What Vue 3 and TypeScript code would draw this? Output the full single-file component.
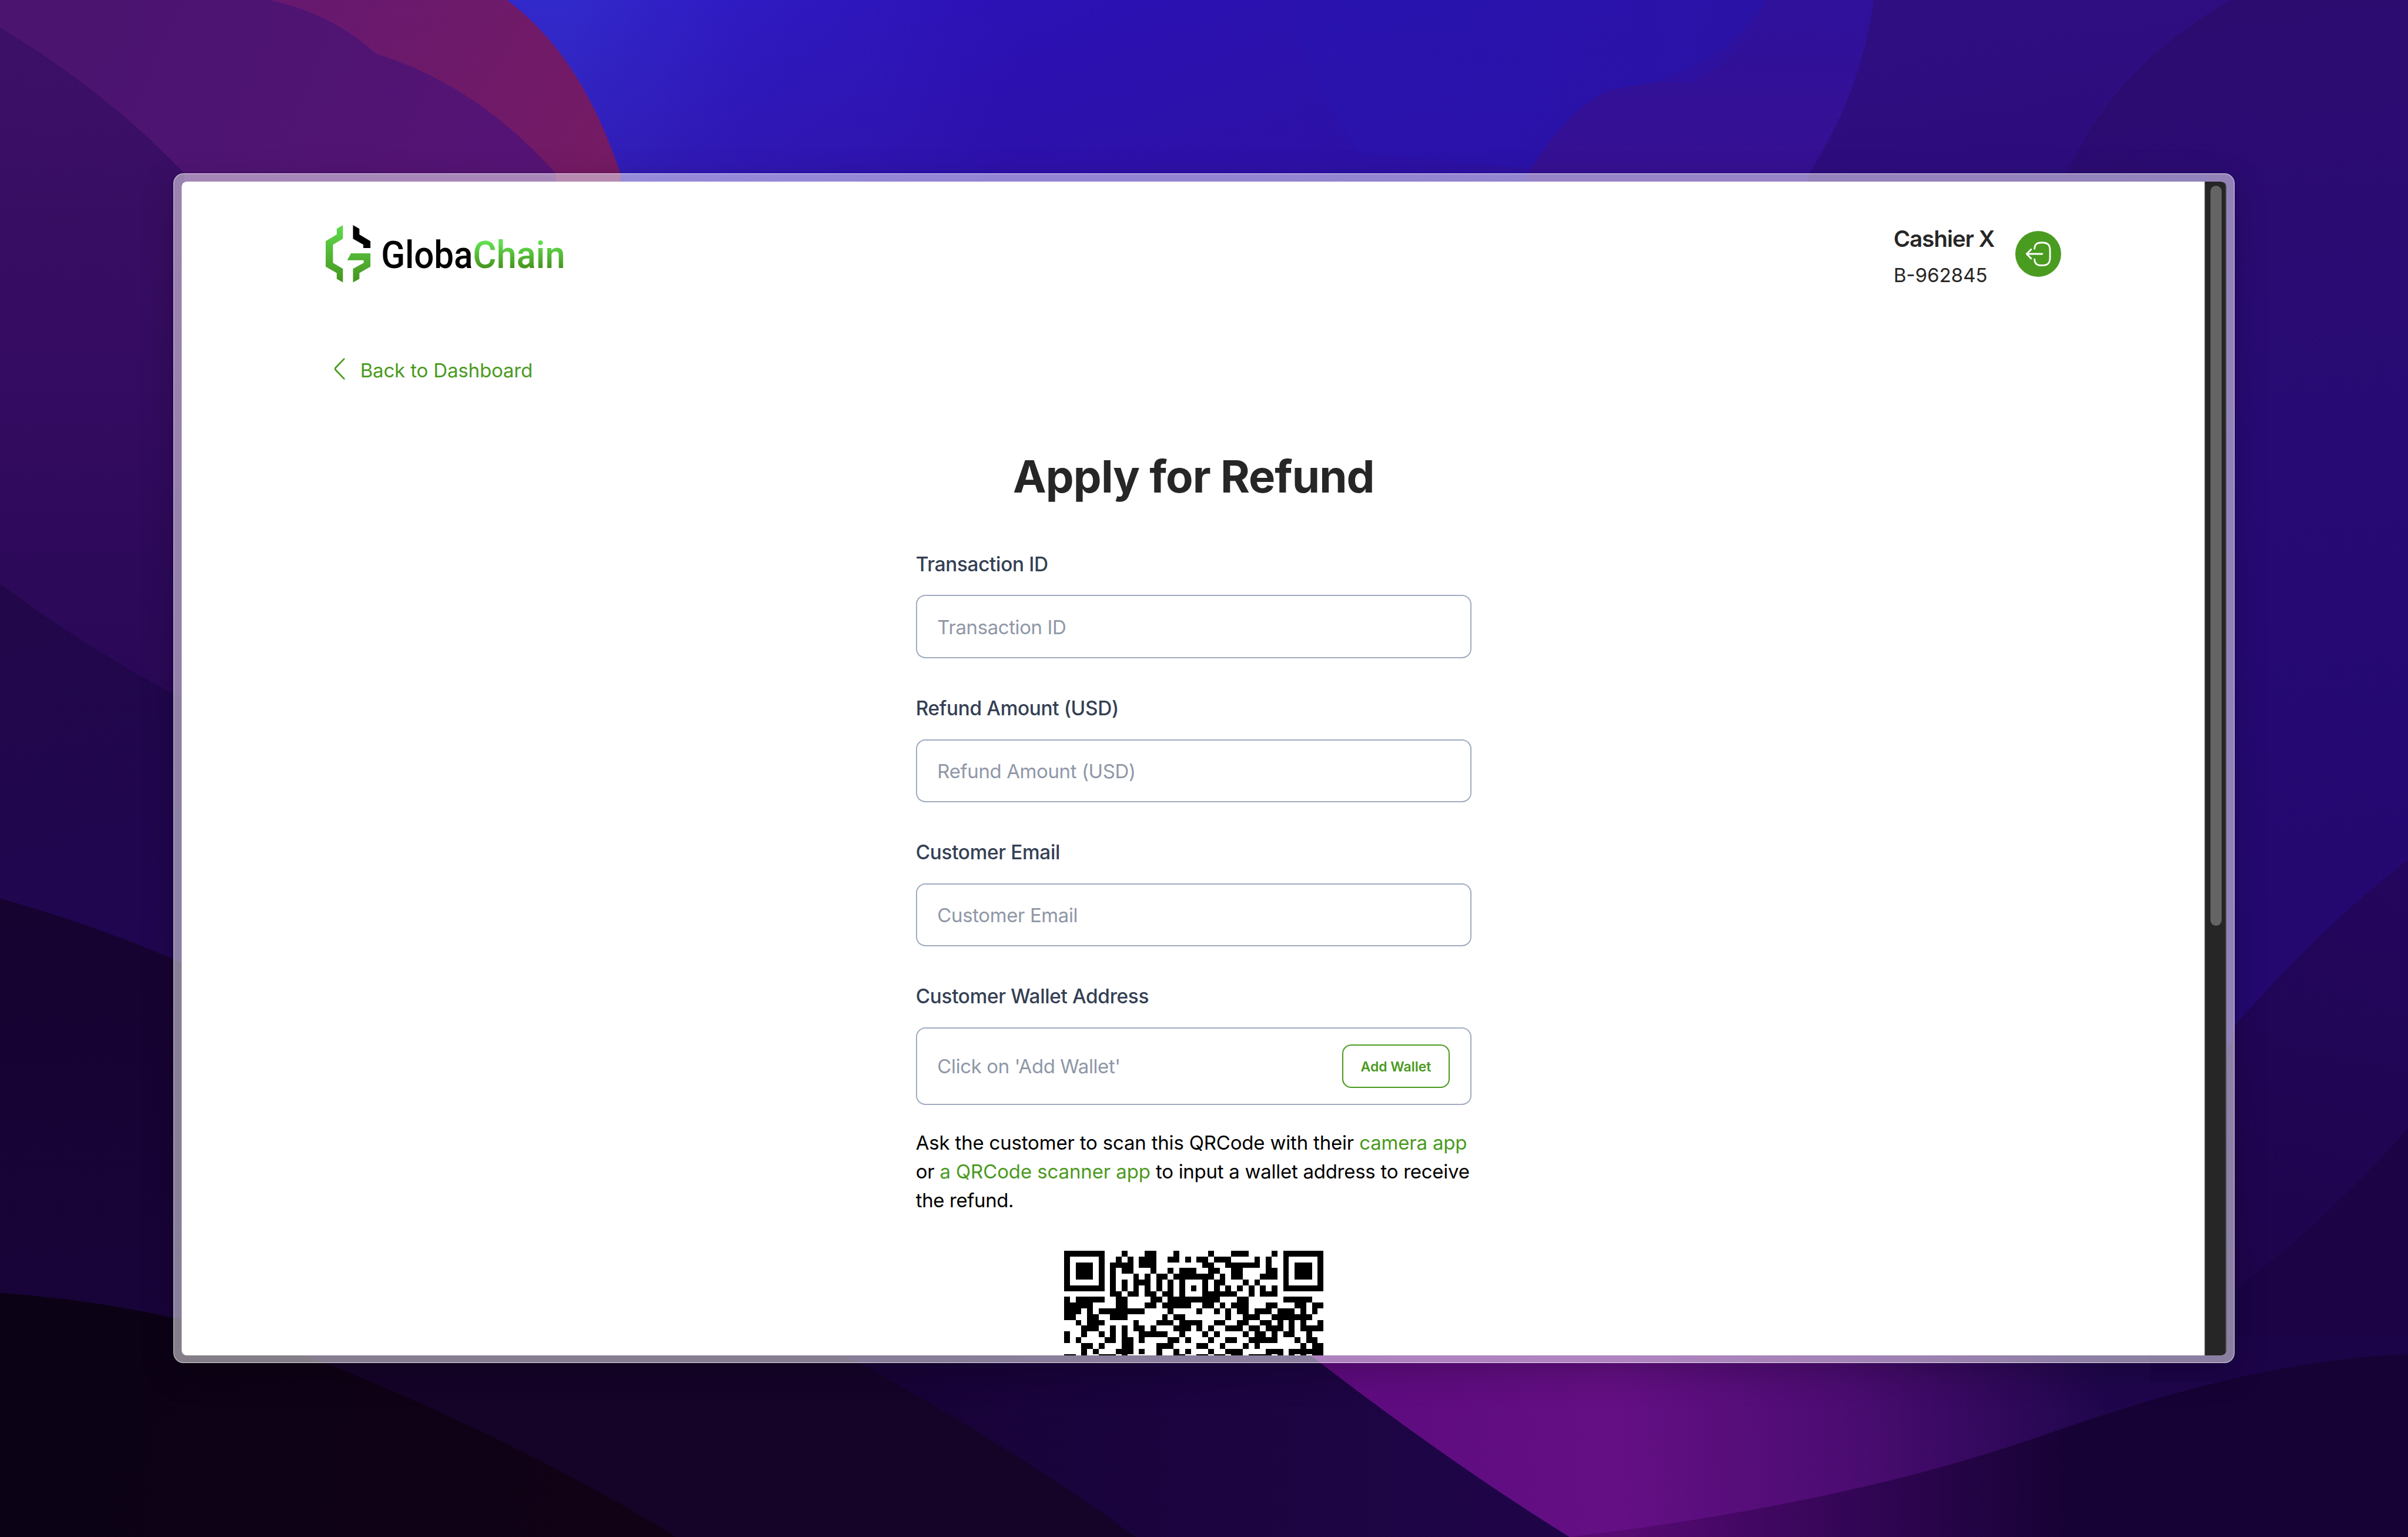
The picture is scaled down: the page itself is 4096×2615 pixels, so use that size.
<script setup lang="ts">
interface Field {
  label: string
}

const fields: Field[] = [
  { label: 'Transaction ID' },
  { label: 'Refund Amount (USD)' },
  { label: 'Customer Email' },
]

// Dark modules of each code row, as "first-last" column runs.
const qrRows: string[] = [
  '0-6 10 14-15 19 25 29-31 36 38-44',
  '0 6 9 11 13-15 18-19 21 23-24 26-28 33 35 38 44',
  '0 2-4 6 8-11 13-15 24-25 28-33 35 38 40-42 44',
  '0 2-4 6 8 10-11 15 18 20-22 25-26 29-30 35-36 38 40-42 44',
  '0 2-4 6 8 12 14 16-17 19-25 27 29-30 34-36 38 40-42 44',
  '0 6 8 10 12-14 16 18 20 24 26-27 31 33 38 44',
  '0-6 8 10 12 14 16 18 20 22 24 26 28 30 32 34 36 38-44',
  '8-9 11-12 14-15 17-18 20 24-29 32 34-36',
  '0 2-6 9-10 15-16 18-26 30-31 38-42',
  '0-4 9-10 14-15 17-21 24-25 27 29-31 35-36 40-41 43-44',
  '0-2 4 6-13 18 23 26 28 30-31 33-35 37-39 41 43',
  '0-1 4-5 8-10 17 19-20 28 31-33 36-42',
  '2 4-6 12 16-18 20-23 26-27 30-31 34-35 37 39 41 44',
  '3-5 8 10 12-13 15 19-21 23 25 28-30 32-33 35-37 39 41-44',
  '0 3 6 8 10 13-17 20 24 26 31 33-34 36 38-39 42',
  '0 2 7-8 10-11 13 18-19 21 25 28-29 32-36 40 42-43',
  '3-4 6 10-11 16-18 23-24 27 31 33 41 43-44',
  '3 5 9-11 13 16 19 21 25 28-30 35-37 39-44',
  '0-1 3 6-8 10 16 19-20 23-24 26-27 29-30 32-35 37 39 41 43-44',
]

const qrPath = qrRows
  .map((row, y) =>
    row
      .split(' ')
      .map((run) => {
        const [a, b = a] = run.split('-').map(Number)
        return `M${a} ${y}h${b - a + 1}v1h-${b - a + 1}z`
      })
      .join(''),
  )
  .join('')
</script>

<template>
  <div class="desktop">
    <svg class="wallpaper" viewBox="0 0 1568 1001" preserveAspectRatio="none" aria-hidden="true">
      <defs>
        <linearGradient id="sky" gradientUnits="userSpaceOnUse" x1="370" y1="60" x2="1200" y2="20">
          <stop offset="0" stop-color="#3229cb" />
          <stop offset=".13" stop-color="#2f1bc2" />
          <stop offset=".35" stop-color="#2c11b5" />
          <stop offset=".7" stop-color="#2b12ab" />
          <stop offset="1" stop-color="#30119a" />
        </linearGradient>
        <linearGradient id="skyShade" x1="0" y1="0" x2="0" y2="1">
          <stop offset="0" stop-color="#30109a" stop-opacity="0" />
          <stop offset="1" stop-color="#30109a" stop-opacity=".5" />
        </linearGradient>
        <linearGradient id="ridge" gradientUnits="userSpaceOnUse" x1="1100" y1="0" x2="1100" y2="113">
          <stop offset="0" stop-color="#2f119c" />
          <stop offset="1" stop-color="#361092" />
        </linearGradient>
        <linearGradient id="east" gradientUnits="userSpaceOnUse" x1="1300" y1="0" x2="1420" y2="720">
          <stop offset="0" stop-color="#2f0e82" />
          <stop offset=".4" stop-color="#290a74" />
          <stop offset=".7" stop-color="#270a72" />
          <stop offset="1" stop-color="#1e0550" />
        </linearGradient>
        <linearGradient id="eastFar" gradientUnits="userSpaceOnUse" x1="1450" y1="0" x2="1500" y2="600">
          <stop offset="0" stop-color="#2d0c70" />
          <stop offset=".5" stop-color="#270a74" />
          <stop offset="1" stop-color="#240870" />
        </linearGradient>
        <linearGradient id="eastLow" gradientUnits="userSpaceOnUse" x1="1560" y1="560" x2="1480" y2="900">
          <stop offset="0" stop-color="#24065e" />
          <stop offset="1" stop-color="#1c0448" />
        </linearGradient>
        <linearGradient id="rose" gradientUnits="userSpaceOnUse" x1="200" y1="0" x2="390" y2="110">
          <stop offset="0" stop-color="#67196f" />
          <stop offset="1" stop-color="#751a64" />
        </linearGradient>
        <linearGradient id="plum" gradientUnits="userSpaceOnUse" x1="60" y1="0" x2="320" y2="113">
          <stop offset="0" stop-color="#4a146f" />
          <stop offset="1" stop-color="#551475" />
        </linearGradient>
        <linearGradient id="west" gradientUnits="userSpaceOnUse" x1="0" y1="20" x2="0" y2="460">
          <stop offset="0" stop-color="#3c1066" />
          <stop offset=".55" stop-color="#330b60" />
          <stop offset="1" stop-color="#290856" />
        </linearGradient>
        <linearGradient id="westMid" gradientUnits="userSpaceOnUse" x1="0" y1="380" x2="60" y2="620">
          <stop offset="0" stop-color="#22074a" />
          <stop offset="1" stop-color="#200650" />
        </linearGradient>
        <linearGradient id="westLow" gradientUnits="userSpaceOnUse" x1="0" y1="585" x2="0" y2="880">
          <stop offset="0" stop-color="#160330" />
          <stop offset="1" stop-color="#19043a" />
        </linearGradient>
        <linearGradient id="floor" gradientUnits="userSpaceOnUse" x1="0" y1="900" x2="440" y2="1001">
          <stop offset="0" stop-color="#0b0216" />
          <stop offset="1" stop-color="#120216" />
        </linearGradient>
        <linearGradient id="indigo" gradientUnits="userSpaceOnUse" x1="600" y1="0" x2="1000" y2="0">
          <stop offset="0" stop-color="#180338" />
          <stop offset="1" stop-color="#1f0548" />
        </linearGradient>
        <linearGradient id="magenta" gradientUnits="userSpaceOnUse" x1="880" y1="900" x2="1370" y2="880">
          <stop offset="0" stop-color="#5f0b80" />
          <stop offset=".35" stop-color="#640f84" />
          <stop offset=".65" stop-color="#4c0c72" />
          <stop offset="1" stop-color="#1f064c" />
        </linearGradient>
        <linearGradient id="wave" gradientUnits="userSpaceOnUse" x1="1060" y1="0" x2="1350" y2="0">
          <stop offset="0" stop-color="#560a72" />
          <stop offset=".5" stop-color="#330556" />
          <stop offset="1" stop-color="#160234" />
        </linearGradient>
      </defs>
      <rect width="1568" height="1001" fill="#1c0440" />
      <rect x="300" width="950" height="200" fill="url(#sky)" />
      <rect x="300" width="950" height="140" fill="url(#skyShade)" />
      <path d="M840 0Q850 50 885 100L1000 110Q1025 70 1050 58Q1120 50 1150 0Z" fill="#2814b0" opacity=".5" />
      <path d="M995 113Q1020 72 1045 60Q1075 52 1100 54Q1135 40 1150 0H1225L1190 140H990Z" fill="url(#ridge)" />
      <path d="M1220 0H1568V720H1400L1100 400L1178 113Q1212 60 1220 0Z" fill="url(#east)" />
      <path d="M1452 0H1568V560Q1500 640 1440 690V113H1346Q1375 45 1452 0Z" fill="url(#eastFar)" />
      <path d="M1568 560Q1515 600 1455 668L1400 1001H1568Z" fill="url(#eastLow)" />
      <path d="M1568 735Q1510 800 1455 840V1001H1568Z" fill="#1b0346" />
      <path d="M0 0H330Q378 35 404 113V200H0Z" fill="url(#rose)" />
      <path d="M0 0H175Q215 8 245 35Q310 55 362 113V200H0Z" fill="url(#plum)" />
      <path d="M0 18Q70 60 120 113V520H0Z" fill="url(#west)" />
      <path d="M0 380Q60 425 125 458V660H0Z" fill="url(#westMid)" />
      <path d="M0 585Q70 605 125 630V920H0Z" fill="url(#westLow)" />
      <path d="M0 842Q70 850 125 870L590 880L760 1001H0Z" fill="#150328" />
      <path d="M0 842Q120 850 230 895Q350 945 440 1001H0Z" fill="url(#floor)" />
      <path d="M545 880H880L1040 1001H740Q640 930 545 880Z" fill="url(#indigo)" />
      <path d="M850 880H1520V1001H1022Q940 950 850 880Z" fill="url(#magenta)" />
      <path d="M1400 870H1568V900H1400Z" fill="#1c0448" />
      <path d="M1022 1001Q1200 980 1330 935Q1470 885 1568 882V1001Z" fill="url(#wave)" />
    </svg>

    <div class="window">
      <div class="viewport">
        <main class="page">
          <header class="topbar">
            <svg class="logo" viewBox="0 0 510 122" role="img">
              <defs>
                <linearGradient id="leaf" x1="0" y1="0" x2="0" y2="122" gradientUnits="userSpaceOnUse">
                  <stop offset="0" stop-color="#60da4c" />
                  <stop offset="1" stop-color="#469420" />
                </linearGradient>
                <linearGradient id="leafText" x1="0" y1="36" x2="0" y2="92" gradientUnits="userSpaceOnUse">
                  <stop offset="0" stop-color="#62e050" />
                  <stop offset="1" stop-color="#46921c" />
                </linearGradient>
              </defs>
              <path d="M36.4 0 23.3 7.7V20L0 33.7V88L23.3 101.3V113.7L36.4 121V92.3L15.4 79.7V41.3L36.4 29Z" fill="url(#leaf)" />
              <path d="M57.7 0 71.2 7.7V20L94.5 33.7V48.3H79.5V41.3L57.7 29Z" fill="#000" />
              <path d="M53.4 59.7H94.5V88L71.2 101.3V113.7L57.7 121V92.3L80.3 79.7V74.3H45.5Z" fill="url(#leaf)" />
              <text x="117" y="90.6" class="brand" textLength="194" lengthAdjust="spacingAndGlyphs">Globa</text>
              <text x="311" y="90.6" class="brand" textLength="195" lengthAdjust="spacingAndGlyphs" fill="url(#leafText)">Chain</text>
            </svg>
            <div class="account">
              <div class="who">
                <strong>Cashier X</strong>
                <span>B-962845</span>
              </div>
              <button class="logout" aria-label="Log out">
                <svg viewBox="0 0 97 97" fill="none" stroke="#fff" stroke-width="3.6" stroke-linecap="round" stroke-linejoin="round">
                  <path d="M40.6 37.5C41.4 27.5 46 24.6 56.4 24.6C68.5 24.6 73.4 29 73.4 41V56C73.4 68 68.5 72.7 56.4 72.7C46 72.7 41.4 69.5 40.6 60" />
                  <path d="M57 48.5H24M33.3 39 24 48.5 33.3 58" />
                </svg>
              </button>
            </div>
          </header>

          <a class="back">
            <svg viewBox="0 0 24 46" fill="none" stroke="#4a9a20" stroke-width="3.4" stroke-linecap="round" stroke-linejoin="round">
              <path d="M21.5 2 4 20.2Q1.5 23 4 25.8L21.5 44" />
            </svg>
            <span>Back to Dashboard</span>
          </a>

          <section class="form">
            <h1>Apply for Refund</h1>
            <div v-for="field in fields" :key="field.label" class="field">
              <label>{{ field.label }}</label>
              <div class="box">{{ field.label }}</div>
            </div>
            <div class="field wallet">
              <label>Customer Wallet Address</label>
              <div class="box tall">
                <span>Click on 'Add Wallet'</span>
                <button class="add">Add Wallet</button>
              </div>
            </div>
            <p class="hint">
              <span class="l1">Ask the customer to scan this QRCode with their <em>camera app</em></span><br />
              <span class="l2">or <em>a QRCode scanner app</em> to input a wallet address to receive</span><br />
              <span class="l3">the refund.</span>
            </p>
            <svg class="qr" viewBox="0 0 45 45" shape-rendering="crispEdges">
              <path :d="qrPath" />
            </svg>
          </section>
        </main>
        <div class="track"><div class="thumb"></div></div>
      </div>
    </div>
  </div>
</template>

<style>
/* 1rem spans 100 layout units of a 5088-unit wide desktop */
html {
  font-size: calc(100vw / 50.88);
}
body {
  margin: 0;
  overflow: hidden;
}
</style>

<style scoped>
.desktop {
  position: relative;
  width: 100vw;
  height: 100vh;
  overflow: hidden;
  box-sizing: border-box;
  padding: 3.67rem;
  font-family: Inter, "Liberation Sans", sans-serif;
  background: #1c0440;
}
.wallpaper {
  position: absolute;
  inset: 0;
  width: 100%;
  height: 100%;
}
.window {
  position: relative;
  box-sizing: border-box;
  width: 43.54rem;
  height: 25.14rem;
  padding: 0.158rem;
  border: 0.02rem solid rgba(255, 255, 255, 0.7);
  border-radius: 0.21rem;
  background: rgba(255, 255, 255, 0.49);
  box-shadow: 0 0.2rem 0.7rem rgba(0, 0, 0, 0.22);
}
.viewport {
  display: flex;
  width: 43.2rem;
  height: 24.8rem;
  border-radius: 0.11rem;
  overflow: hidden;
  background: #fff;
}
.page {
  flex: 1;
  height: 24.8rem;
  overflow: hidden;
  display: flex;
  flex-direction: column;
}
.page > * {
  flex-shrink: 0;
}
.track {
  box-sizing: border-box;
  width: 0.46rem;
  border-left: 0.03rem solid #3a3a3a;
  border-right: 0.03rem solid #424242;
  background: #262626;
  padding: 0.09rem 0 0 0.1rem;
}
.thumb {
  width: 0.24rem;
  height: 15.64rem;
  border-radius: 0.12rem;
  background: #646464;
}
.topbar {
  box-sizing: border-box;
  display: flex;
  justify-content: space-between;
  align-items: flex-start;
  padding: 0.9rem 3.03rem 0 3.045rem;
  height: 3.18rem;
}
.logo {
  width: 5.1rem;
  height: 1.22rem;
  margin-top: 0.02rem;
  overflow: visible;
}
.brand {
  font-family: Roboto, sans-serif;
  font-weight: 500;
  font-size: 80px;
}
.account {
  display: flex;
  gap: 0.42rem;
}
.who {
  display: flex;
  flex-direction: column;
  width: 2.15rem;
  color: #262626;
  white-space: nowrap;
}
.who strong {
  font-size: 0.477rem;
  font-weight: 600;
  line-height: 0.6rem;
  letter-spacing: -0.012rem;
}
.who span {
  font-size: 0.41rem;
  line-height: 0.6rem;
  margin-top: 0.17rem;
}
.logout {
  width: 0.97rem;
  height: 0.97rem;
  margin-top: 0.14rem;
  padding: 0;
  border: 0;
  border-radius: 50%;
  background: #4a9c20;
}
.logout svg {
  display: block;
  width: 100%;
  height: 100%;
}
.back {
  display: flex;
  align-items: center;
  gap: 0.32rem;
  height: 0.6rem;
  margin: 0.48rem 0 0 3.21rem;
  color: #4a9a20;
  font-size: 0.41rem;
  letter-spacing: -0.002rem;
  white-space: nowrap;
}
.back span {
  padding-top: 0.05rem;
}
.back svg {
  width: 0.24rem;
  height: 0.46rem;
}
.form {
  width: 11.74rem;
  margin-left: 15.51rem;
}
h1 {
  margin: 1.37rem 0 0.957rem;
  font-size: 0.945rem;
  line-height: 1.2rem;
  font-weight: 700;
  letter-spacing: -0.0115rem;
  text-align: center;
  color: #262626;
  white-space: nowrap;
}
.field {
  height: 3.044rem;
}
label {
  display: block;
  line-height: 0.6rem;
  font-size: 0.415rem;
  font-weight: 500;
  letter-spacing: -0.0046rem;
  color: #344054;
}
.box {
  box-sizing: border-box;
  display: flex;
  align-items: center;
  height: 1.34rem;
  margin-top: 0.35rem;
  padding: 0.02rem 0.43rem 0;
  border: 0.03rem solid #a0acc0;
  border-radius: 0.2rem;
  font-size: 0.41rem;
  letter-spacing: -0.005rem;
  color: #8f97a7;
  white-space: nowrap;
}
.tall {
  height: 1.64rem;
  justify-content: space-between;
}
.add {
  box-sizing: border-box;
  width: 2.28rem;
  height: 0.92rem;
  padding: 0.02rem 0 0;
  border: 0.03rem solid #4a9a20;
  border-radius: 0.19rem;
  background: #fff;
  color: #4a9a20;
  font: 600 0.285rem Inter, sans-serif;
}
.wallet {
  height: 2.59rem;
}
.hint {
  margin: 0.506rem 0 0;
  font-size: 0.41rem;
  line-height: 0.608rem;
  color: #000;
  white-space: nowrap;
}
.l1 {
  letter-spacing: -0.0024rem;
}
.l2 {
  letter-spacing: -0.0034rem;
}
.l2 em {
  letter-spacing: -0.0015rem;
}
.l3 {
  letter-spacing: -0.005rem;
}
.hint em {
  font-style: normal;
  color: #4a9a20;
}
.qr {
  display: block;
  width: 5.48rem;
  height: 5.48rem;
  margin: 0.76rem auto 0;
}
</style>
